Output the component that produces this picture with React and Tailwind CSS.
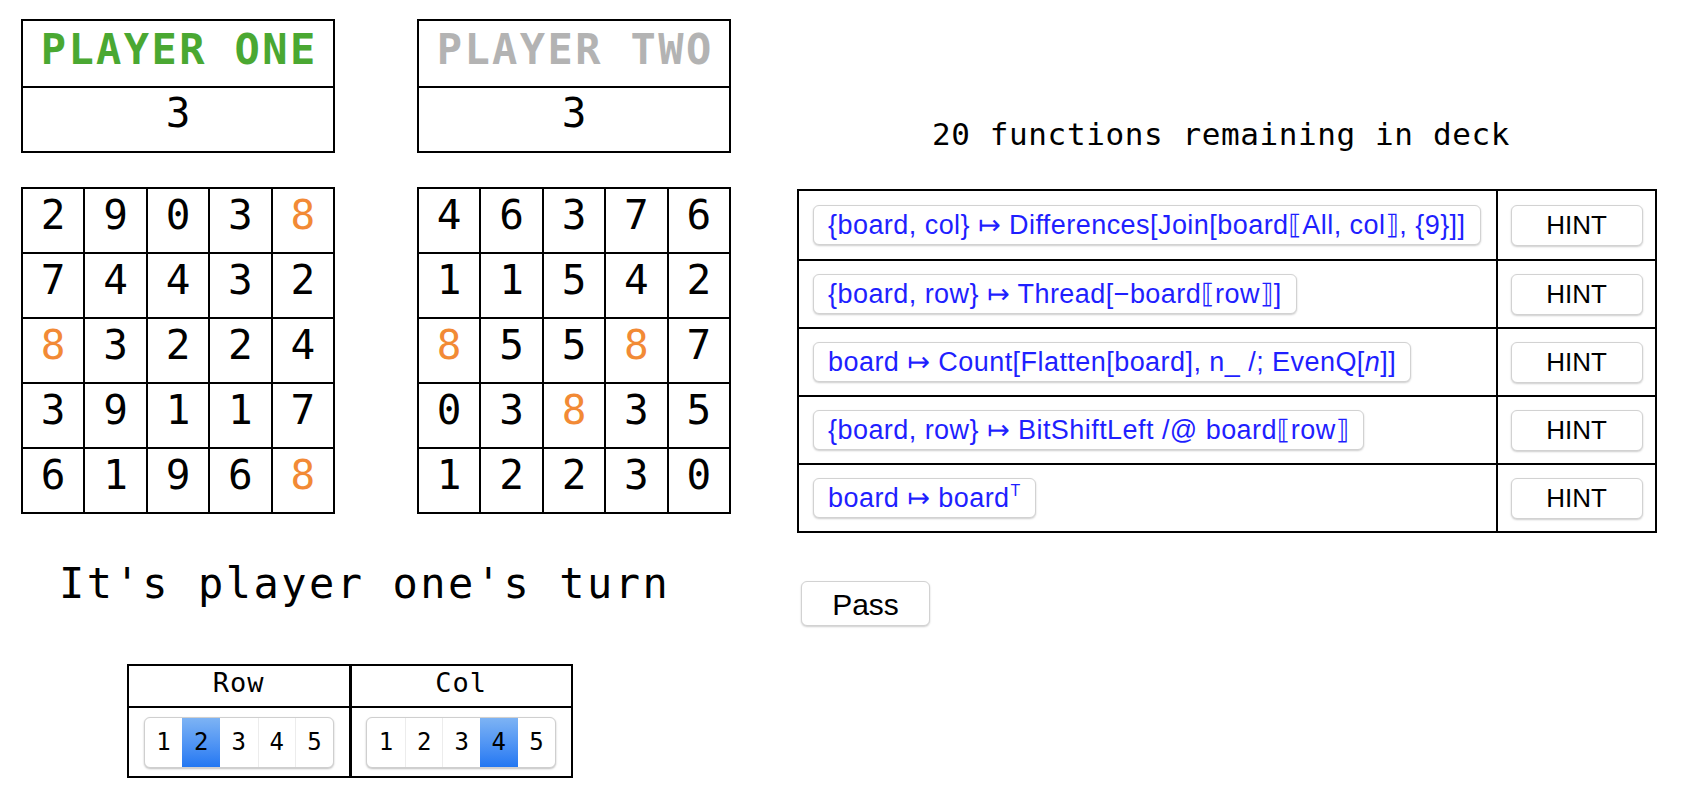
import React from 'react'

const MONO = { fontFamily: "'DejaVu Sans Mono', 'Liberation Mono', monospace" }
const SANS = { fontFamily: "'Liberation Sans', 'DejaVu Sans', sans-serif" }

const BOARD_ONE = [
  [2, 9, 0, 3, 8],
  [7, 4, 4, 3, 2],
  [8, 3, 2, 2, 4],
  [3, 9, 1, 1, 7],
  [6, 1, 9, 6, 8],
]

const BOARD_TWO = [
  [4, 6, 3, 7, 6],
  [1, 1, 5, 4, 2],
  [8, 5, 5, 8, 7],
  [0, 3, 8, 3, 5],
  [1, 2, 2, 3, 0],
]

const FUNCTIONS = [
  <>{'{board, col} ↦ Differences[Join[board⟦All, col⟧, {9}]]'}</>,
  <>{'{board, row} ↦ Thread[−board⟦row⟧]'}</>,
  <>board ↦ Count[Flatten[board], n_ /; EvenQ[<i>n</i>]]</>,
  <>{'{board, row} ↦ BitShiftLeft /@ board⟦row⟧'}</>,
  <>board ↦ board<sup className="text-[16px] relative -top-[7px] ml-[1px]">T</sup></>,
]

function PlayerBox({ name, color, score }) {
  return (
    <div className="w-[314px] border-2 border-black">
      <div className="h-[67px] pt-[8px] flex justify-center border-b-2 border-black">
        <span className={`text-[42px] leading-none font-bold tracking-[2.4px] pl-[2.4px] ${color}`} style={MONO}>
          {name}
        </span>
      </div>
      <div className="h-[63px] pt-[5px] flex justify-center">
        <span className="text-[41px] leading-none text-black" style={MONO}>{score}</span>
      </div>
    </div>
  )
}

function Board({ rows }) {
  return (
    <div className="w-[314px] grid grid-cols-5 border-l-2 border-t-2 border-black">
      {rows.flat().map((n, i) => (
        <div key={i} className="h-[65px] border-r-2 border-b-2 border-black flex justify-center pt-[6px]">
          <span className={`text-[41px] leading-none ${n === 8 ? 'text-[#f28a35]' : 'text-black'}`} style={MONO}>
            {n}
          </span>
        </div>
      ))}
    </div>
  )
}

function Segmented({ selected }) {
  return (
    <div className="flex h-[51px] rounded-[6px] border border-[#cfcfcf] bg-white shadow-[0_1px_2px_rgba(0,0,0,0.25)] overflow-hidden">
      {[1, 2, 3, 4, 5].map(n => (
        <div key={n}
          className={`w-[37.6px] flex items-center justify-center text-[24px] leading-none text-black ${
            n === selected ? 'bg-gradient-to-b from-[#7db3f4] to-[#2277f2]' : ''
          } ${n > 1 && n !== selected && n - 1 !== selected ? 'border-l border-[#ececec]' : ''}`}
          style={MONO}>
          {n}
        </div>
      ))}
    </div>
  )
}

export default function App() {
  return (
    <div className="w-[1682px] h-[801px] bg-white flex overflow-hidden">
      {/* Left: players and boards */}
      <div className="w-[797px] pl-[21px] pt-[19px] flex flex-col">
        <div className="flex gap-[82px]">
          <PlayerBox name="PLAYER ONE" color="text-[#4aa832]" score={3} />
          <PlayerBox name="PLAYER TWO" color="text-[#b3b3b3]" score={3} />
        </div>

        <div className="flex gap-[82px] mt-[34px]">
          <Board rows={BOARD_ONE} />
          <Board rows={BOARD_TWO} />
        </div>

        <div className="mt-[49px] ml-[38px] text-[42px] leading-none tracking-[2.5px] text-black whitespace-nowrap" style={MONO}>
          It's player one's turn
        </div>

        <div className="mt-[59px] ml-[106px] w-[446px] flex border-2 border-black">
          {[['Row', 2], ['Col', 4]].map(([label, sel], i) => (
            <div key={label} className={`flex-1 flex flex-col ${i > 0 ? 'border-l-[3px] border-black' : ''}`}>
              <div className="h-[42px] pt-[3px] flex justify-center border-b-2 border-black">
                <span className="text-[27px] leading-none tracking-[1px]" style={MONO}>{label}</span>
              </div>
              <div className="h-[68px] flex items-center justify-center">
                <Segmented selected={sel} />
              </div>
            </div>
          ))}
        </div>
      </div>

      {/* Right: deck and functions */}
      <div className="w-[860px] flex flex-col">
        <div className="mt-[119px] pr-[12px] flex justify-center">
          <span className="text-[31px] leading-none tracking-[0.6px] text-black whitespace-nowrap" style={MONO}>
            20 functions remaining in deck
          </span>
        </div>

        <div className="mt-[39px] border-2 border-black">
          {FUNCTIONS.map((f, i) => (
            <div key={i} className={`h-[68px] flex ${i > 0 ? 'border-t-2 border-black' : ''}`}>
              <div className="w-[697px] px-[14px] flex items-center">
                <div className="h-[40px] px-[14px] flex items-center rounded-[6px] border border-[#d2d2d2] bg-white shadow-[0_1px_2px_rgba(0,0,0,0.2)] text-[27px] text-[#1f1fff] whitespace-nowrap tracking-[0.45px]"
                  style={SANS}>
                  {f}
                </div>
              </div>
              <div className="flex-1 border-l-2 border-black flex items-center justify-center">
                <button className="w-[132px] h-[41px] rounded-[6px] border border-[#d2d2d2] bg-white shadow-[0_1px_2px_rgba(0,0,0,0.2)] text-[26px] text-black"
                  style={SANS}>
                  HINT
                </button>
              </div>
            </div>
          ))}
        </div>

        <div className="mt-[48px] ml-[4px]">
          <button className="w-[129px] h-[45px] rounded-[6px] border border-[#d2d2d2] bg-white shadow-[0_1px_2px_rgba(0,0,0,0.2)] text-[30px] text-black"
            style={SANS}>
            Pass
          </button>
        </div>
      </div>
    </div>
  )
}
